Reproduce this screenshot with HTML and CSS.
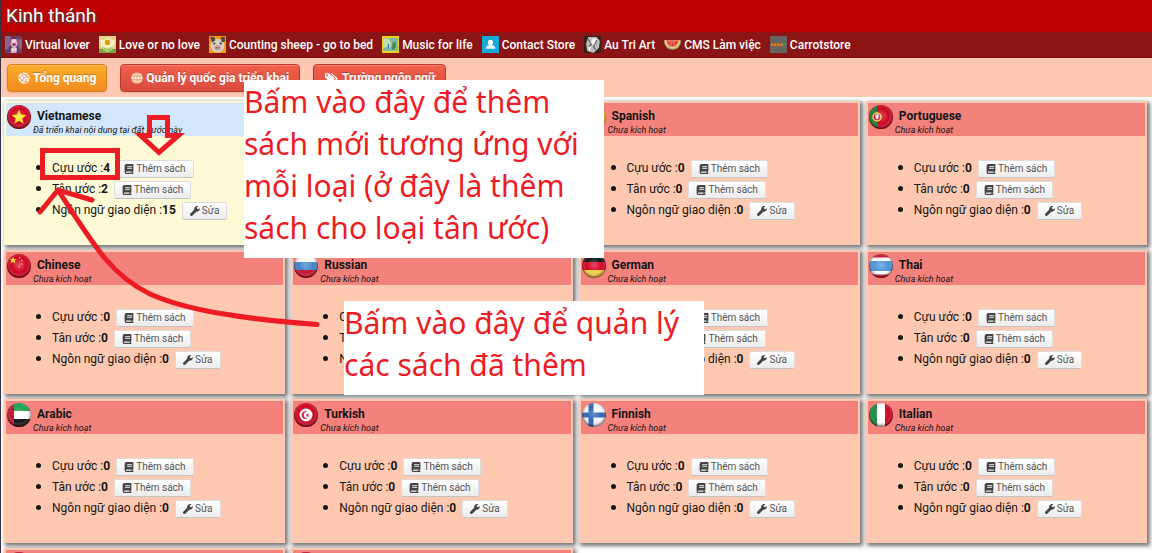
FILE: index.html
```html
<!DOCTYPE html>
<html lang="vi">
<head>
<meta charset="utf-8">
<title>Kinh thánh</title>
<link rel="stylesheet" href="styles.css">
</head>
<body>
<svg class="defs" aria-hidden="true">
  <defs>
    <radialGradient id="shade" cx="50%" cy="45%" r="52%">
      <stop offset="0" stop-color="#fff" stop-opacity=".3"/>
      <stop offset=".65" stop-color="#fff" stop-opacity="0"/>
      <stop offset="1" stop-color="#200" stop-opacity=".55"/>
    </radialGradient>
    <clipPath id="disc"><circle cx="12" cy="12" r="12"/></clipPath>
    <symbol id="book" viewBox="0 0 16 16"><path fill-rule="evenodd" d="M4 0h11v12h-1v2h1v2H4a3 3 0 0 1-3-3V3a3 3 0 0 1 3-3zM5 3v1.500h8V3zM5 6v1.500h8V6zM4 12a1 1 0 0 0 0 2h8v-2z"/></symbol>
    <symbol id="wrench" viewBox="0 0 16 16"><path d="M15.700 3.400 13 5.200 10.900 4.100V2L13.700.4A5 5 0 0 0 6.700 6L.8 11.900a2 2 0 0 0 3.200 3.300L10 9.200a5 5 0 0 0 5.700-5.800z"/></symbol>
    <symbol id="ball" viewBox="0 0 16 16"><circle cx="8" cy="8" r="7.500"/><path class="cut" d="M8 8 14.500 5M8 8 3 13.500M8 8 4.500 1.500M5 5.500 1 8M9 4.500 13 2.500M11 9.500 10.500 15M6 2.500C10 3 13 6 14 10M12 13C8 13.500 4 11 2 7"/></symbol>
    <symbol id="globe" viewBox="0 0 16 16"><circle cx="8" cy="8" r="7.500"/><path class="cut" d="M0 5.500h16M0 10.500h16M8 0v16"/><ellipse class="cut" cx="8" cy="8" rx="4" ry="7.500"/></symbol>
    <symbol id="tags" viewBox="0 0 18 16"><path fill-rule="evenodd" d="M0 1.500h6L13.500 9 8 14.500.000 7zM3 3a1.200 1.200 0 1 0 .1 0zM8 1.500h1.500L17.500 9 12 14.500l-1.200-1L15 9z"/></symbol>
  </defs>
</svg>

<header class="title"><h1>Kinh thánh</h1></header>

<nav class="sites">
  <a href="#lover"><svg viewBox="0 0 16 16"><path fill="#64406f" d="M0 0h16v16H0z"/><path fill="#8a6590" d="M0 0h5v8l-3 5H0zM12 3h4v9h-3z"/><path fill="#d9a9bd" d="M6 2h5l1 6-2 3 1 5H5l2-5-2-3z"/><path fill="#7f2945" d="M6 1h5v2H6zM7 7h3v2H7z"/><path fill="#f6dcdc" d="M7 3h3v3H7zM6 11h2v3H6zM9 11h2v3H9z"/></svg>Virtual lover</a>
  <a href="#love"><svg viewBox="0 0 16 16"><path fill="#e3d48a" d="M0 0h16v16H0z"/><path fill="#77a83d" d="M0 12h16v4H0z"/><path fill="#f4f0bd" d="m1 4 5-1 2-2 2 2 5 1-1 5-2 4-4 2-4-2-2-4z"/><circle cx="8" cy="6" r="2.500" fill="#d99a1a"/><path fill="#a9c46a" d="m3 10 5 2 5-2-2 4H5z"/></svg>Love or no love</a>
  <a href="#sheep"><svg viewBox="0 0 16 16"><path fill="#f19b1d" d="M0 0h16v16H0z"/><ellipse cx="8" cy="9" rx="6.500" ry="6.500" fill="#d3d0c8"/><path fill="#54483e" d="M1 1h4l1 3-3 2zM11 1h4v4l-3 1z"/><circle cx="5" cy="7" r="1" fill="#333"/><circle cx="11" cy="7" r="1" fill="#333"/><ellipse cx="8" cy="11" rx="3" ry="2.500" fill="#c99a94"/><path fill="#5c4440" d="M6.500 10.500h1v1h-1zM9 10.500h1v1H9z"/></svg>Counting sheep - go to bed</a>
  <a href="#music"><svg viewBox="0 0 16 16"><path fill="#e6d420" d="M0 0h16v16H0z"/><path fill="#7bb8aa" d="M1 2h14v12H1z"/><path fill="#c5dfb0" d="m1 3 5-1 3 5-2 5-3-2-3 2z"/><path fill="#4e8f50" d="m10 6 3-1v5l-2 3H9z"/><path fill="none" stroke="#3471a0" d="M6 7v5M11 8v4"/></svg>Music for life</a>
  <a href="#contact"><svg viewBox="0 0 16 16"><path fill="#14a9d7" d="M0 0h16v16H0z"/><circle cx="8" cy="6" r="2.500" fill="#fff"/><path fill="#e8f8ff" d="M3.500 12c0-3 2-3.500 4.500-3.500s4.500.5 4.500 3.500z"/></svg>Contact Store</a>
  <a href="#art"><svg viewBox="0 0 16 16"><path fill="#35211e" d="M0 0h16v16H0z"/><path fill="#bcbcb8" d="M4 1h8l3 4-1 6-5 5-6-2-1-7z"/><path fill="#f2f2ef" d="m8 2 4 1-2 6-4-2zM3 9l4 1-2 4z"/><path fill="none" stroke="#565656" d="m4 3 3 5-3 2m8-6-3 6 2 3"/></svg>Au Tri Art</a>
  <a href="#cms"><svg viewBox="0 0 16 16"><path fill="#a5b45a" d="M0 4h16c0 5-3 9-8 9S0 9 0 4z"/><path fill="#efe3b8" d="M1 4h14c0 4-3 7.500-7 7.500S1 8 1 4z"/><path fill="#ef5f4c" d="M2 4h12c0 4-3 6.500-6 6.500S2 8 2 4z"/><path stroke="#6d2320" d="M5 6v1M8 7v1M11 6v1"/></svg>CMS Làm việc</a>
  <a href="#carrot"><svg viewBox="0 0 16 16"><path fill="#666461" d="M0 0h16v16H0z"/><path fill="#df861c" d="M1 7h11v2.500H1z"/><path fill="#58883f" d="M12 6h3v3h-3z"/><path stroke="#8d5f2b" d="M3.500 7v3M6.500 7v3M9.500 7v3"/></svg>Carrotstore</a>
</nav>

<div class="toolbar">
  <button type="button" class="btn btn-orange"><svg viewBox="0 0 16 16"><use href="#ball"/></svg>Tổng quang</button>
  <button type="button" class="btn btn-red"><svg viewBox="0 0 16 16"><use href="#globe"/></svg>Quản lý quốc gia triển khai</button>
  <button type="button" class="btn btn-red"><svg class="wide" viewBox="0 0 18 16"><use href="#tags"/></svg>Trường ngôn ngữ</button>
</div>

<main class="grid" id="grid"></main>

<svg class="marks" width="330" height="340" viewBox="0 0 330 340" aria-hidden="true">
  <rect x="42.500" y="150.500" width="75" height="27"/>
  <path d="M149.500 117.500h18v18h11l-19.500 17-18.500-17h9z"/>
  <path d="M317 324.500C245 319 188 311 150 294 112 276 94 246 58 190M40 212 58 190 92 200"/>
</svg>
<p class="note note-add">Bấm vào đây để thêm sách mới tương ứng với mỗi loại (ở đây là thêm sách cho loại tân ước)</p>
<p class="note note-manage">Bấm vào đây để quản lý các sách đã thêm</p>

<script src="app.js"></script>
</body>
</html>
```
FILE: styles.css
```css
* { box-sizing: border-box; }

body {
  position: relative;
  height: 100vh;
  margin: 0;
  overflow: hidden;
  border-left: 1px solid #333344;
  background: #fff;
  color: #151515;
  font-family: Roboto, "Noto Sans", sans-serif;
  font-size: 12px;
}

.defs { position: absolute; width: 0; height: 0; }

.title { background: #bf0000; padding: 0 5px; }

.title h1 {
  margin: 0;
  color: #fff;
  font-size: 19px;
  font-weight: 400;
  line-height: 32px;
  text-shadow: 2px 2px 2px #444;
}

.sites {
  display: flex;
  gap: 9px;
  height: 26px;
  padding: 0 4px;
  align-items: center;
  background: #8b1414;
  border-bottom: 1px solid #791111;
  white-space: nowrap;
}

.sites a {
  display: flex;
  align-items: center;
  gap: 3px;
  color: #fff;
  font-weight: 500;
  text-decoration: none;
}

.sites svg { width: 17px; height: 17px; }

.toolbar {
  display: flex;
  gap: 13px;
  padding: 6px 6px 5px;
  background: #ffc9b1;
}

.btn {
  display: flex;
  align-items: center;
  gap: 3px;
  height: 28px;
  padding: 0 10px;
  border: 1px solid;
  border-radius: 4px;
  color: #fff;
  font: bold 12px Roboto, "Noto Sans", sans-serif;
  text-shadow: 0 -1px 0 rgba(0, 0, 0, .25);
  box-shadow: inset 0 1px 0 rgba(255, 255, 255, .2), 0 1px 2px rgba(0, 0, 0, .1);
  white-space: nowrap;
}

.btn svg { width: 12px; height: 12px; fill: #fff; }
.btn svg.wide { width: 15px; }
.cut { fill: none; stroke: #ec7a35; stroke-width: 1px; }
.btn-orange { background: linear-gradient(#f9ae2c, #f28a1f); border-color: #d97c1a; }
.btn-red { background: linear-gradient(#f26049, #d84b40); border-color: #b93a32; }

.grid {
  display: grid;
  grid-template-columns: repeat(4, 1fr);
  gap: 5px 6px;
  padding: 4px 5px 4px 3px;
}

.card {
  height: 144px;
  padding: 2px;
  background: #ffc9b1;
  box-shadow: 2px 2px 4px 1px #777;
}

.card-head {
  display: flex;
  gap: 2px;
  height: 33px;
  padding: 2px 1px;
  background: #f3827c;
}

.flag { flex: none; width: 24px; height: 24px; }

.card h2 {
  margin: 0;
  padding: 4px 0 0 4px;
  font-size: 12px;
  font-weight: 700;
  line-height: 15px;
}

.card-head p {
  margin: 0;
  font: italic 9px/12px Roboto, "Noto Sans", sans-serif;
}

.card ul {
  margin: 0;
  padding: 21px 0 0 46px;
}

.card li { line-height: 21px; height: 21px; }
.card li::marker { font-size: 15px; }

.card.active { background: #fffad6; }
.card.active .card-head { background: #d3e7fb; }

.mini {
  display: inline-flex;
  align-items: center;
  gap: 2px;
  height: 18px;
  margin-left: 6px;
  padding: 0 7px;
  border: 1px solid #ddd;
  border-bottom-color: #c4c4c4;
  border-radius: 2px;
  background: linear-gradient(#fff, #ececec);
  color: #555;
  font: 10px Roboto, "Noto Sans", sans-serif;
  vertical-align: middle;
}

.mini svg { width: 10px; height: 10px; fill: #444; }

.marks {
  position: absolute;
  top: 0;
  left: -1px;
  fill: none;
  stroke: #ed1c24;
  stroke-width: 5px;
  stroke-linecap: round;
  pointer-events: none;
}

.note {
  position: absolute;
  width: 360px;
  margin: 0;
  background: #fff;
  color: #ed1c24;
  font: 30px/42px "Noto Sans", sans-serif;
}

.note-add { top: 80px; left: 243px; padding: 1px 0 9px; }
.note-manage { top: 301px; left: 343px; padding: 1px 0 9px; }
```
FILE: app.js
```javascript
const bands = (a, b, c) =>
  `<path fill="${a}" d="M0 0h24v8H0z"/><path fill="${b}" d="M0 8h24v8H0z"/><path fill="${c}" d="M0 16h24v8H0z"/>`;
const star = '<path d="m12 4.500 2 5.100 5.500.3-4.300 3.500 1.500 5.300-4.700-3-4.700 3 1.500-5.300L4.500 9.900l5.500-.3z" fill="#ffe11a"/>';
const red = '<path fill="#d0021f" d="M0 0h24v24H0z"/>';

const flags = {
  vn: red + star,
  cn: red + '<path fill="#ffe11a" d="m6 3 1 2.200h2.500L7.600 6.800l.8 2.500L6 7.900 3.700 9.300l.7-2.500-1.900-1.600H5z"/><path stroke="#f5a52a" stroke-width="1.500" d="M12 3.500h1.500M14 6.500h1.500M14 10h1.500M11.500 12.500H13"/>',
  es: '<path fill="#ffcf1a" d="M0 0h24v24H0z"/><path fill="#c8001c" d="M0 0h24v6H0zM0 18h24v6H0z"/>',
  pt: red + '<path fill="#1b7a2e" d="M0 0h8v24H0z"/><circle cx="8" cy="12" r="4" fill="#d0021f" stroke="#ecd04a" stroke-width="1.500"/><path fill="#fff" d="M6.500 9.500h3V13L8 14.500 6.500 13z"/>',
  ru: bands('#f8f8f8', '#3f82cc', '#c8102e'),
  de: bands('#111', '#d80022', '#f5ce42'),
  th: '<path fill="#c8102e" d="M0 0h24v24H0z"/><path fill="#fff" d="M0 3.500h24v17H0z"/><path fill="#4b92d4" d="M0 7h24v10H0z"/>',
  ae: bands('#17a355', '#fff', '#111') + '<path fill="#c8102e" d="M0 0h7v24H0z"/>',
  tr: red + '<circle cx="12" cy="12" r="6.500" fill="#fff"/><path d="M13.500 8.500a4 4 0 1 0 0 7 3.200 3.200 0 1 1 0-7z" fill="#d0021f"/><path d="m13 10 .8 1.300 1.600-.2-1 1.200.8 1.500-1.500-.6-1.200 1.100.1-1.700-1.300-.8 1.500-.3z" fill="#d0021f"/>',
  fi: '<path fill="#f6f8ff" d="M0 0h24v24H0z"/><path stroke="#2a62b5" stroke-width="5" d="M9 0v24M0 12h24"/>',
  it: '<path fill="#168a43" d="M0 0h8v24H0z"/><path fill="#fff" d="M8 0h8v24H8z"/><path fill="#d0021f" d="M16 0h8v24h-8z"/>'
};

// Entries without a name are placeholders that show only their frame and flag.
const languages = [
  { name: 'Vietnamese', flag: 'vn', counts: [4, 2, 15], active: true },
  { flag: 'vn' },
  { name: 'Spanish', flag: 'es' },
  { name: 'Portuguese', flag: 'pt' },
  { name: 'Chinese', flag: 'cn' },
  { name: 'Russian', flag: 'ru' },
  { name: 'German', flag: 'de' },
  { name: 'Thai', flag: 'th' },
  { name: 'Arabic', flag: 'ae' },
  { name: 'Turkish', flag: 'tr' },
  { name: 'Finnish', flag: 'fi' },
  { name: 'Italian', flag: 'it' },
  { flag: 'vn' },
  { flag: 'vn' }
];

const button = (icon, label) =>
  `<button type="button" class="mini"><svg viewBox="0 0 16 16"><use href="#${icon}"/></svg>${label}</button>`;

document.getElementById('grid').innerHTML = languages.map(({ name, flag, counts = [0, 0, 0], active }) => `
  <section class="card${active ? ' active' : ''}">
    <div class="card-head">
      <svg class="flag" viewBox="0 0 24 24"><g clip-path="url(#disc)">${flags[flag]}<path fill="url(#shade)" d="M0 0h24v24H0z"/></g></svg>
      ${name ? `<div><h2>${name}</h2><p>${active ? 'Đã triển khai nội dung tại đất nước này' : 'Chưa kích hoạt'}</p></div>` : ''}
    </div>
    ${name ? `<ul>
      <li>Cựu ước :<b>${counts[0]}</b>${button('book', 'Thêm sách')}</li>
      <li>Tân ước :<b>${counts[1]}</b>${button('book', 'Thêm sách')}</li>
      <li>Ngôn ngữ giao diện :<b>${counts[2]}</b>${button('wrench', 'Sửa')}</li>
    </ul>` : ''}
  </section>`).join('');
```
